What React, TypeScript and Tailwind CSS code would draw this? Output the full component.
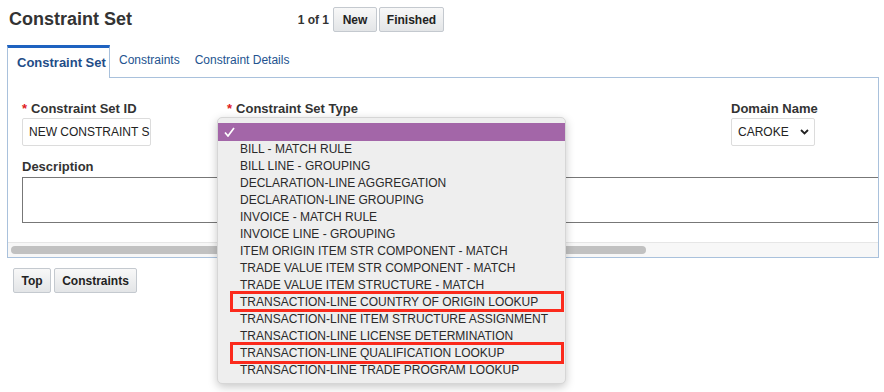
import React from "react";

const types = [
  "BILL - MATCH RULE",
  "BILL LINE - GROUPING",
  "DECLARATION-LINE AGGREGATION",
  "DECLARATION-LINE GROUPING",
  "INVOICE - MATCH RULE",
  "INVOICE LINE - GROUPING",
  "ITEM ORIGIN ITEM STR COMPONENT - MATCH",
  "TRADE VALUE ITEM STR COMPONENT - MATCH",
  "TRADE VALUE ITEM STRUCTURE - MATCH",
  "TRANSACTION-LINE COUNTRY OF ORIGIN LOOKUP",
  "TRANSACTION-LINE ITEM STRUCTURE ASSIGNMENT",
  "TRANSACTION-LINE LICENSE DETERMINATION",
  "TRANSACTION-LINE QUALIFICATION LOOKUP",
  "TRANSACTION-LINE TRADE PROGRAM LOOKUP",
];

const btn =
  "h-[25px] flex items-center justify-center rounded-[2px] border border-[#c4c9cf] bg-gradient-to-b from-[#f8f8f8] to-[#e3e5e7] text-[12px] font-bold text-[#222]";

function Label({ text, required }: { text: string; required?: boolean }) {
  return (
    <div className="h-[17px] leading-[17px] text-[13px] font-bold text-[#333] whitespace-nowrap">
      {required && <span className="text-[#e0201c] mr-[4px]">*</span>}
      {text}
    </div>
  );
}

export default function App() {
  return (
    <div
      className="relative w-[884px] h-[392px] bg-white overflow-hidden"
      style={{ fontFamily: '"Liberation Sans", Arial, sans-serif' }}
    >
      {/* header */}
      <div className="flex items-center h-[25px] mt-[7px]">
        <h1 className="ml-[9px] w-[287px] text-[18px] font-bold text-[#333] leading-[25px]">
          Constraint Set
        </h1>
        <span className="w-[37px] pr-[4px] text-right text-[12px] font-bold text-[#333]">1 of 1</span>
        <button className={`${btn} w-[44px]`}>New</button>
        <button className={`${btn} w-[65px] ml-[2px]`}>Finished</button>
      </div>

      {/* tabs + panel */}
      <div className="ml-[7px] w-[872px] mt-[13px]">
        <div className="flex items-end h-[33px] border-b border-[#a9c1dc]">
          <div className="w-[103px] h-[33px] -mb-px border-t-[3px] border-t-[#1e62c0] border-x border-x-[#a9c1dc] bg-white pl-[9px] text-[13px] font-bold text-[#1f4d88] leading-[29px]">
            Constraint Set
          </div>
          <div className="ml-[9px] h-[32px] leading-[31px] text-[12px] text-[#23538f]">Constraints</div>
          <div className="ml-[15px] h-[32px] leading-[31px] text-[12px] text-[#23538f]">Constraint Details</div>
        </div>

        <div className="border-x border-b border-[#a9c1dc] overflow-hidden">
          <div className="pt-[22px] pl-[14px]">
            <div className="flex">
              <div className="w-[205px]">
                <Label text="Constraint Set ID" required />
                <div className="mt-px w-[129px] h-[28px] border border-[#dcdcdc] rounded-[2px] flex items-center pl-[6px] text-[12px] text-[#222] overflow-hidden whitespace-nowrap">
                  NEW CONSTRAINT S
                </div>
              </div>
              <div className="w-[504px]">
                <Label text="Constraint Set Type" required />
                <div className="mt-px w-[200px] h-[28px]" />
              </div>
              <div>
                <Label text="Domain Name" />
                <div className="mt-px w-[84px] h-[28px] border border-[#dcdcdc] rounded-[2px] flex items-center justify-between pl-[6px] pr-[5px] text-[12px] text-[#222]">
                  <span>CAROKE</span>
                  <svg width="9" height="6" viewBox="0 0 9 6">
                    <polyline points="1,1 4.5,4.5 8,1" fill="none" stroke="#222" strokeWidth="1.8" />
                  </svg>
                </div>
              </div>
            </div>

            <div className="mt-[12px]">
              <Label text="Description" />
              <div className="mt-[2px] w-[900px] h-[46px] border border-[#777] bg-white" />
            </div>
          </div>

          {/* horizontal scrollbar */}
          <div className="mt-[19px] h-[15px] bg-[#f7f7f7] border-t border-[#e6e6e6] flex items-center">
            <div className="ml-[3px] w-[635px] h-[8px] rounded-full bg-[#c1c1c1]" />
          </div>
        </div>
      </div>

      {/* bottom buttons */}
      <div className="flex ml-[13px] mt-[10px] gap-[3px]">
        <button className={`${btn} w-[38px]`}>Top</button>
        <button className={`${btn} w-[83px]`}>Constraints</button>
      </div>

      {/* open dropdown menu */}
      <div className="absolute left-[217px] top-[117px] w-[349px] pt-[5px] pb-[4px] bg-[#eeeeee] rounded-[5px] border border-[#d6d6d6] shadow-[0_3px_10px_rgba(0,0,0,0.22)]">
        <div className="h-[18px] bg-[#a366a8] flex items-center pl-[6px]">
          <svg width="11" height="10" viewBox="0 0 11 10">
            <polyline points="1,5.5 4,9 10,1" fill="none" stroke="#fff" strokeWidth="1.7" />
          </svg>
        </div>
        {types.map((t) => (
          <div key={t} className="h-[17px] leading-[17px] pl-[22px] text-[12px] text-[#2a2a2a] whitespace-nowrap">
            {t}
          </div>
        ))}
        <div className="absolute left-[12px] top-[173px] w-[334px] h-[21px] border-[3px] border-[#fb2a1c]" />
        <div className="absolute left-[12px] top-[224px] w-[334px] h-[22px] border-[3px] border-[#fb2a1c]" />
      </div>
    </div>
  );
}
